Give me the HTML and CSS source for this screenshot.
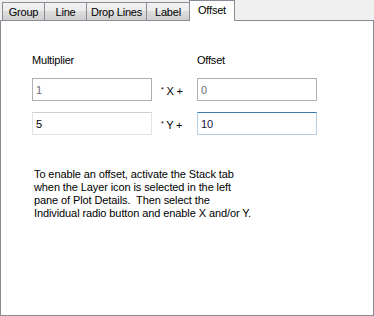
FILE: index.html
```html
<!DOCTYPE html>
<html lang="en">
<head>
    <meta charset="UTF-8">
    <title>Offset</title>
    <link rel="stylesheet" href="styles.css">
</head>
<body>
    <div class="dialog">
        <div class="tabs">
            <div class="tab tab-group">Group</div>
            <div class="tab tab-line">Line</div>
            <div class="tab tab-drop">Drop Lines</div>
            <div class="tab tab-label">Label</div>
            <div class="tab tab-offset active">Offset</div>
        </div>

        <div class="panel">
            <div class="form">
                <div class="caption">Multiplier</div>
                <div></div>
                <div class="caption">Offset</div>

                <input class="box" type="text" value="1" disabled>
                <div class="op"><span class="star">*</span> X +</div>
                <input class="box" type="text" value="0" disabled>

                <input class="box" type="text" value="5">
                <div class="op"><span class="star">*</span> Y +</div>
                <input class="box focus" type="text" value="10">
            </div>

            <p class="note">
                To enable an offset, activate the Stack tab<br>
                when the Layer icon is selected in the left<br>
                pane of Plot Details.&nbsp; Then select the<br>
                Individual radio button and enable X and/or Y.
            </p>
        </div>
    </div>
</body>
</html>
```

FILE: styles.css
```css
*{
    margin: 0;
    padding: 0;
    box-sizing: border-box;
}

body{
    background-color: #f0f0f0;
    font-family: "Liberation Sans", Arial, sans-serif;
    font-size: 11px;
    letter-spacing: -0.2px;
    color: #000;
}

.dialog{
    width: 374px;
    height: 316px;
}

/* ---------- tabs ---------- */

.tabs{
    display: flex;
    align-items: flex-end;
    height: 21px;
    padding-left: 2px;
    border-bottom: 1px solid #898c95;
}

.tab{
    height: 18px;
    margin-right: -1px;
    padding-top: 1px;
    line-height: 16px;
    text-align: center;
    border: 1px solid #898c95;
    border-bottom: none;
    background: linear-gradient(#f2f2f2, #ebebeb 50%, #dddddd 50%, #cfcfcf);
    white-space: nowrap;
}

.tab-group{ width: 43px; }
.tab-line{ width: 43px; }
.tab-drop{ width: 61px; }
.tab-label{ width: 44px; }

.tab.active{
    width: 46px;
    height: 21px;
    margin-bottom: -1px;
    padding-top: 0;
    line-height: 18px;
    background: #fff;
}

/* ---------- panel ---------- */

.panel{
    height: 295px;
    background-color: #fff;
    border: 1px solid #898c95;
    border-top: none;
    padding-top: 33px;
}

.form{
    display: grid;
    grid-template-columns: 120px 45px 120px;
    grid-template-rows: 13px 23px 23px;
    row-gap: 11px;
    margin-left: 31px;
}

.form .caption{
    line-height: 13px;
}

.box{
    height: 23px;
    width: 120px;
    padding: 0 3px;
    font-family: inherit;
    font-size: 11px;
    color: #000;
    background: #fff;
    border: 1px solid #dfe3e9;
    border-top-color: #cdd0d5;
    outline: none;
}

.box:disabled{
    color: #6d6d6d;
    border-color: #afafaf;
    background: #fff;
}

.box.focus{
    color: #1a1040;
    border-color: #b5cfe7;
    border-top-color: #3d7bad;
}

.op{
    padding-left: 9px;
    line-height: 23px;
    white-space: nowrap;
}

.star{
    font-size: 7px;
    vertical-align: 3px;
}

.note{
    margin: 33px 0 0 33px;
    line-height: 13px;
    letter-spacing: -0.1px;
}
```
